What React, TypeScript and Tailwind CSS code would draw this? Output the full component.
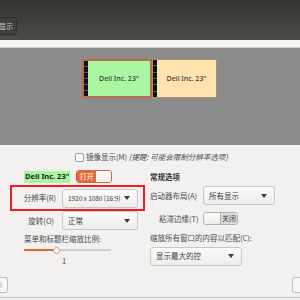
const font = { fontFamily: '"Noto Sans CJK SC", "Noto Sans", sans-serif' };

function Caret() {
  return (
    <svg width="6" height="4" viewBox="0 0 6 4" className="shrink-0">
      <path d="M0 0h6L3 4z" fill="#3c3c3c" />
    </svg>
  );
}

function Dropdown({ label, width, small }: { label: string; width: string; small?: boolean }) {
  return (
    <div className={`${width} h-[19px] flex items-center justify-between pl-[5px] pr-[7px] rounded-[3px] border border-[#c9c6c1] bg-gradient-to-b from-[#fbfbfa] to-[#eeedeb] text-[#3c3c3c] whitespace-nowrap`}>
      <span className={small ? 'text-[6.6px] tracking-[-0.1px]' : ''}>{label}</span>
      <Caret />
    </div>
  );
}

function Monitor({ green }: { green?: boolean }) {
  return (
    <div
      className={`flex h-[39px] ${green ? 'w-[70px] border-2 border-[#b86d4f] bg-[#a9f6a1]' : 'w-[65px] border border-[#a8947a] bg-[#ffe3ae]'}`}
    >
      <div className="w-[4px] bg-[#111] flex flex-col justify-evenly">
        <div className="h-px bg-[#555]" />
        <div className="h-px bg-[#555]" />
        <div className="h-px bg-[#555]" />
        <div className="h-px bg-[#555]" />
        <div className="h-px bg-[#555]" />
      </div>
      <div className="flex-1 flex items-center justify-center text-[7px] font-medium text-[#3b3b3b]" style={{ fontFamily: '"Noto Sans", sans-serif' }}>
        Dell Inc. 23"
      </div>
    </div>
  );
}

export default function App() {
  return (
    <div className="w-[300px] h-[300px] overflow-hidden bg-[#f2f1f0] flex flex-col text-[7.5px] leading-none" style={font}>
      {/* title bar */}
      <div className="h-[40px] bg-gradient-to-b from-[#353431] to-[#4d4c47] flex items-end pb-[5px]">
        <div className="h-[18px] w-[19px] -ml-[2px] rounded-[3px] border border-[#2f2e2b] bg-[#403f3b] flex items-center justify-end pr-[3px] text-[#c9c7c2] text-[7px]">
          显示
        </div>
      </div>
      <div className="h-[8px] bg-[#f5f4f3] border-b border-[#cfcdca]" />

      {/* monitor preview */}
      <div className="h-[97px] bg-[#8b8b8b] flex pl-[82px] pt-[11px]">
        <Monitor green />
        <Monitor />
      </div>

      {/* checkbox */}
      <div className="flex items-center pl-[75px] mt-[7px] h-[10px] text-[#4a4a4a] whitespace-nowrap">
        <div className="w-[9px] h-[9px] rounded-[2px] border border-[#9c9a96] bg-white mr-[2px]" />
        <span>镜像显示(M)&nbsp;</span>
        <span className="italic">(提醒: 可能会限制分辨率选项)</span>
      </div>

      <div className="flex mt-[8px] whitespace-nowrap">
        {/* left column */}
        <div className="w-[140px] pl-[10px] flex flex-col">
          <div className="flex items-center pl-[14px] h-[13px]">
            <span className="bg-[#a8f7a0] font-bold text-[#222] px-px h-[12px] flex items-center" style={{ fontFamily: '"Noto Sans", sans-serif' }}>
              Dell Inc. 23"
            </span>
            <div className="ml-[6px] w-[36px] h-[13px] rounded-[3px] border border-[#c66a44] flex overflow-hidden">
              <div className="w-[19px] bg-[#e4693b] text-white flex items-center justify-center text-[7px]">打开</div>
              <div className="flex-1 bg-gradient-to-b from-white to-[#ecebea]" />
            </div>
          </div>
          <div className="mt-[2px] w-[135px] h-[26px] border-2 border-[#ee1c24] flex items-center">
            <span className="w-[50px] text-right pr-[6px] text-[#4a4a4a]">分辨率(R)</span>
            <Dropdown label="1920 x 1080 (16:9)" width="w-[76px]" small />
          </div>
          <div className="flex items-center h-[19px]">
            <span className="w-[52px] text-right pr-[8px] text-[#4a4a4a]">旋转(O)</span>
            <Dropdown label="正常" width="w-[76px]" />
          </div>
          <div className="mt-[5px] pl-[14px] text-[#4a4a4a]">菜单和标题栏缩放比例:</div>
          <div className="pl-[14px] mt-[4px] flex items-center w-[101px]">
            <div className="h-[2px] w-[29px] bg-[#e0672f]" />
            <div className="w-[7px] h-[7px] rounded-full border border-[#a8a6a2] bg-white" />
            <div className="h-[2px] flex-1 bg-[#cfcdca]" />
          </div>
          <div className="pl-[52px] mt-[3px] text-[#4a4a4a]">1</div>
        </div>

        {/* right column */}
        <div className="flex-1 pl-[10px] flex flex-col">
          <div className="font-bold text-[#333] h-[12px] flex items-center mt-[1px]">常规选项</div>
          <div className="mt-[3px] flex items-center">
            <span className="w-[53px] text-[#4a4a4a]">启动器布局(A)</span>
            <Dropdown label="所有显示" width="w-[72px]" />
          </div>
          <div className="mt-[7px] flex items-center">
            <span className="w-[53px] pl-[9px] text-[#4a4a4a]">粘滞边缘(T)</span>
            <div className="w-[35px] h-[13px] rounded-[3px] border border-[#b3b0ab] flex overflow-hidden">
              <div className="w-[17px] bg-gradient-to-b from-white to-[#ecebea] border-r border-[#b3b0ab]" />
              <div className="flex-1 bg-[#dddbd7] text-[#3c3c3c] flex items-center justify-center text-[7px]">关闭</div>
            </div>
          </div>
          <div className="mt-[9px] text-[#4a4a4a]">缩放所有窗口的内容以匹配(C):</div>
          <div className="mt-[5px]">
            <Dropdown label="显示最大的控" width="w-[92px]" />
          </div>
        </div>
      </div>

      {/* bottom buttons */}
      <div className="flex justify-between mt-[11px] h-[16px]">
        <div className="w-[8px] rounded-r-[3px] border border-l-0 border-[#c2bfba] bg-[#f7f7f6] flex items-center text-[#5b6b9a] text-[6px]">)</div>
        <div className="w-[8px] rounded-l-[3px] border border-r-0 border-[#c2bfba] bg-[#f7f7f6]" />
      </div>
      <div className="mt-auto h-[3px] border-t border-[#c6c4c0]" />
    </div>
  );
}
